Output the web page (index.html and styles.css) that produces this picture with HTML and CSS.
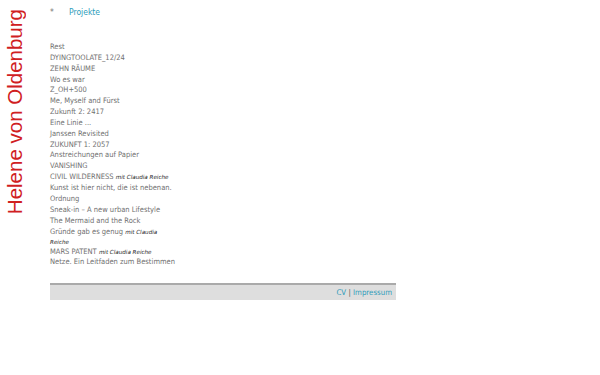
FILE: index.html
```
<!DOCTYPE html>
<html>
<head>
<meta charset="utf-8">
<link rel="stylesheet" href="styles.css">
</head>
<body>
<div class="page">
  <div class="side"><div class="title">Helene von Oldenburg</div></div>
  <div class="main">
    <div class="nav"><span class="star">*</span><a class="link" href="#">Projekte</a></div>
    <ul class="list">
      <li>Rest</li>
      <li>DYINGTOOLATE_12/24</li>
      <li>ZEHN RÄUME</li>
      <li>Wo es war</li>
      <li>Z_OH+500</li>
      <li>Me, Myself and Fürst</li>
      <li>Zukunft 2: 2417</li>
      <li>Eine Linie ...</li>
      <li>Janssen Revisited</li>
      <li>ZUKUNFT 1: 2057</li>
      <li>Anstreichungen auf Papier</li>
      <li>VANISHING</li>
      <li>CIVIL WILDERNESS <span class="mit">mit Claudia Reiche</span></li>
      <li>Kunst ist hier nicht, die ist nebenan.</li>
      <li>Ordnung</li>
      <li>Sneak-in – A new urban Lifestyle</li>
      <li>The Mermaid and the Rock</li>
      <li class="narrow">Gründe gab es genug <span class="mit">mit Claudia</span><br><span class="mit">Reiche</span></li>
      <li>MARS PATENT <span class="mit">mit Claudia Reiche</span></li>
      <li>Netze. Ein Leitfaden zum Bestimmen</li>
    </ul>
    <div class="foot"><a class="link" href="#">CV</a> <span class="sep">|</span> <a class="link" href="#">Impressum</a></div>
  </div>
</div>
</body>
</html>
```
FILE: styles.css
```
html, body { margin: 0; padding: 0; background: #fff; }
body { font-family: "DejaVu Sans Condensed", "DejaVu Sans", sans-serif; color: #707070; }
.page { display: flex; }
.side { width: 50px; flex: none; padding-top: 9px; }
.title {
  writing-mode: vertical-rl;
  transform: rotate(180deg);
  font-family: "Liberation Sans", Arial, sans-serif;
  font-size: 20.5px;
  line-height: 24px;
  color: #d0201f;
  margin-left: 3px;
  width: 24px;
}
.main { width: 346px; flex: none; }
.nav { font-size: 8.5px; height: 25px; padding-top: 7px; box-sizing: border-box; display: flex; }
.star { width: 19px; color: #777; }
.link { color: #2e9cba; text-decoration: none; }
.list { list-style: none; margin: 17px 0 0; padding: 0; font-size: 7.5px; line-height: 10.85px; }
.mit { font-family: "DejaVu Sans", sans-serif; font-style: italic; font-size: 5.6px; line-height: 8px; color: #222; }
.narrow { line-height: 9.6px; padding-top: 1px; }
.foot {
  margin-top: 15px;
  background: #dedede;
  border-top: 2px solid #aaa;
  height: 15px;
  text-align: right;
  font-size: 7.8px;
  line-height: 15px;
  padding-right: 4px;
}
.sep { color: #555; }
```
